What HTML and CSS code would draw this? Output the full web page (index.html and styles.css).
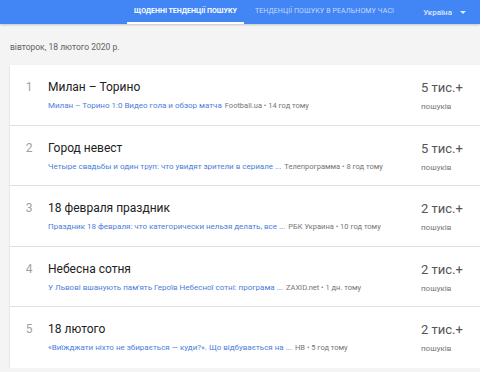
FILE: index.html
```html
<!DOCTYPE html>
<html>

<head>
    <title>Тенденції пошуку</title>
    <link rel="stylesheet" href="styles.css">
</head>

<body>

    <div class="topbar">
        <div class="tab active">ЩОДЕННІ ТЕНДЕНЦІЇ ПОШУКУ</div>
        <div class="tab">ТЕНДЕНЦІЇ ПОШУКУ В РЕАЛЬНОМУ ЧАСІ</div>
        <div class="country">Україна <span class="arrow"></span></div>
    </div>

    <div class="content">
        <div class="date">вівторок, 18 лютого 2020 р.</div>
        <div class="card">
            <div class="row">
                <div class="num">1</div>
                <div class="main">
                    <div class="title">Милан – Торино</div>
                    <div class="sub"><span class="link">Милан – Торино 1:0 Видео гола и обзор матча</span> <span class="src">Football.ua • 14 год тому</span></div>
                </div>
                <div class="count">
                    <div class="big">5 тис.+</div>
                    <div class="small">пошуків</div>
                </div>
            </div>
            <div class="row">
                <div class="num">2</div>
                <div class="main">
                    <div class="title">Город невест</div>
                    <div class="sub"><span class="link">Четыре свадьбы и один труп: что увидят зрители в сериале ...</span> <span class="src">Телепрограмма • 8 год тому</span></div>
                </div>
                <div class="count">
                    <div class="big">5 тис.+</div>
                    <div class="small">пошуків</div>
                </div>
            </div>
            <div class="row">
                <div class="num">3</div>
                <div class="main">
                    <div class="title">18 февраля праздник</div>
                    <div class="sub"><span class="link">Праздник 18 февраля: что категорически нельзя делать, все ...</span> <span class="src">РБК Украина • 10 год тому</span></div>
                </div>
                <div class="count">
                    <div class="big">2 тис.+</div>
                    <div class="small">пошуків</div>
                </div>
            </div>
            <div class="row">
                <div class="num">4</div>
                <div class="main">
                    <div class="title">Небесна сотня</div>
                    <div class="sub"><span class="link">У Львові вшанують пам'ять Героїв Небесної сотні: програма ...</span> <span class="src">ZAXID.net • 1 дн. тому</span></div>
                </div>
                <div class="count">
                    <div class="big">2 тис.+</div>
                    <div class="small">пошуків</div>
                </div>
            </div>
            <div class="row">
                <div class="num">5</div>
                <div class="main">
                    <div class="title">18 лютого</div>
                    <div class="sub"><span class="link">«Виїжджати ніхто не збирається — куди?». Що відбувається на ...</span> <span class="src">НВ • 5 год тому</span></div>
                </div>
                <div class="count">
                    <div class="big">2 тис.+</div>
                    <div class="small">пошуків</div>
                </div>
            </div>
        </div>
    </div>

</body>

</html>
```

FILE: styles.css
```css
body {
    margin: 0;
    background-color: #f4f4f4;
    font-family: Roboto, "Noto Sans", sans-serif;
    overflow: hidden;
}

.topbar {
    display: flex;
    align-items: stretch;
    height: 24px;
    padding-left: 127px;
    background-color: #4285f4;
    box-shadow: 0 1px 2px rgba(0,0,0,0.2);
}

.tab {
    display: flex;
    align-items: center;
    flex-shrink: 0;
    white-space: nowrap;
    padding: 0 7px;
    font-size: 7px;
    color: rgba(255,255,255,0.7);
    border-bottom: 2px solid transparent;
    box-sizing: border-box;
}

.tab.active {
    color: #fff;
    font-weight: 700;
    border-bottom-color: #fff;
}

.tab + .tab {
    margin-left: 4px;
    letter-spacing: 0.1px;
}

.country {
    display: flex;
    align-items: center;
    flex-shrink: 0;
    white-space: nowrap;
    margin-left: 22px;
    font-size: 8px;
    font-weight: 500;
    color: rgba(255,255,255,0.85);
}

.arrow {
    margin-left: 8px;
    border-left: 3px solid transparent;
    border-right: 3px solid transparent;
    border-top: 3px solid rgba(255,255,255,0.85);
}

.content {
    padding: 18px 0 0 10px;
}

.date {
    font-size: 8.5px;
    color: #616161;
    height: 23px;
}

.card {
    width: 480px;
    background-color: #fff;
    box-shadow: 0 1px 2px rgba(0,0,0,0.15);
}

.row {
    display: flex;
    height: 60.5px;
    border-bottom: 1px solid #e0e0e0;
    box-sizing: border-box;
}

.row:last-child {
    border-bottom: none;
}

.num {
    width: 38px;
    padding-top: 15px;
    text-align: center;
    font-size: 12px;
    color: #a0a0a0;
}

.main {
    flex: 1;
    padding-top: 15px;
}

.title {
    font-size: 12px;
    color: #212121;
    height: 21px;
}

.sub {
    font-size: 8px;
    white-space: nowrap;
}

.link {
    color: #4c7ed9;
}

.src {
    margin-left: 1px;
    font-size: 7.5px;
    color: #757575;
}

.count {
    width: 69px;
    flex-shrink: 0;
    padding-top: 15px;
}

.big {
    font-size: 13px;
    color: #555;
    height: 22px;
}

.small {
    font-size: 8px;
    color: #757575;
}
```
